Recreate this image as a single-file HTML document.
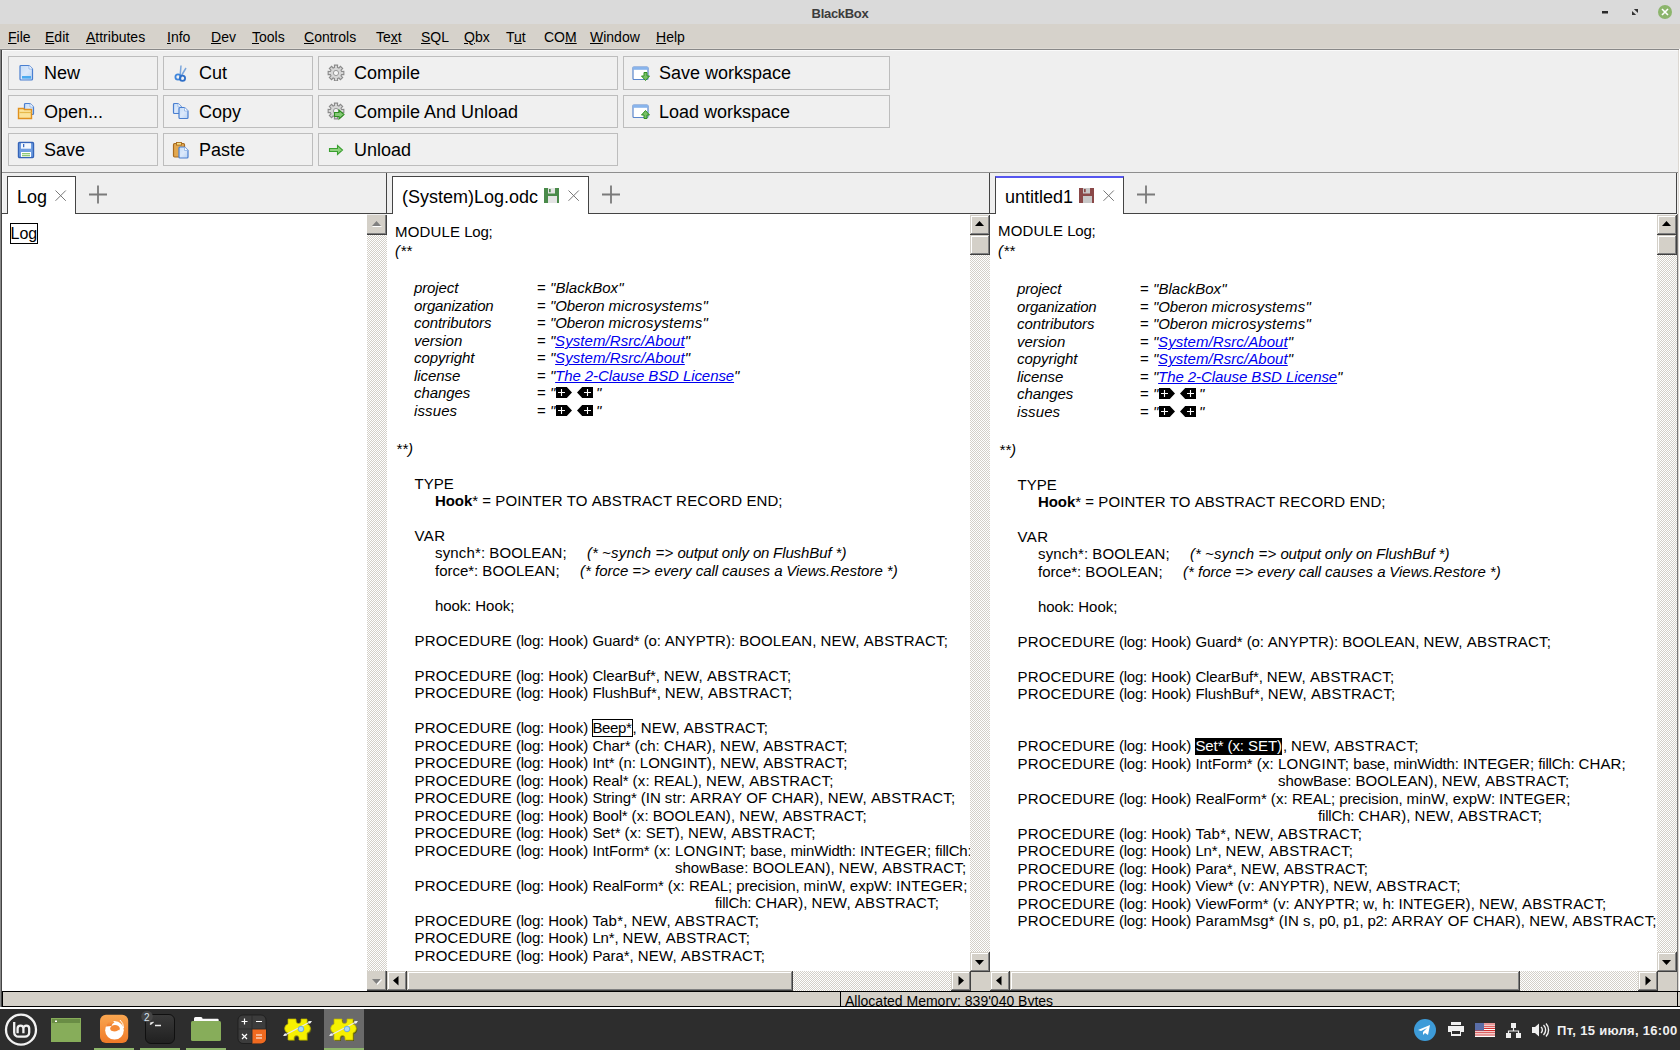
<!DOCTYPE html>
<html><head><meta charset="utf-8">
<style>
*{margin:0;padding:0;box-sizing:border-box}
html,body{width:1680px;height:1050px;overflow:hidden;background:#fff;font-family:"Liberation Sans",sans-serif;position:relative}
.a{position:absolute}
.ln{position:absolute;font-size:15px;line-height:17px;white-space:pre;color:#000}
.w{position:absolute;font-size:15px;line-height:17px;white-space:pre;color:#000}
.it{font-style:italic}.bd{font-weight:bold}
.ln i{font-style:italic;letter-spacing:-0.08px}
.ln b{font-weight:bold}
.lk{color:#0000ee;text-decoration:underline;text-underline-offset:1px;font-style:italic}
.beep{box-shadow:inset 0 0 0 1px #000;padding-bottom:1px;padding-right:1px}.sel{background:linear-gradient(to bottom,transparent 1px,#000 1px);padding-bottom:1px;color:#fff}
.fold{vertical-align:0;margin-left:1px}
#title{left:0;top:0;width:1680px;height:24px;background:#dadada}
#title .t{position:absolute;left:0;width:1680px;top:6px;text-align:center;font-size:13px;font-weight:bold;color:#3c3c3c;letter-spacing:-0.3px}
#menu{left:0;top:24px;width:1680px;height:25px;background:#d6d2cb;border-bottom:1px solid #dedad4}
#menu span{position:absolute;top:5px;font-size:14px;color:#000}
#menu u{text-decoration:underline;text-underline-offset:1px}
#win{left:0;top:49px;width:1680px;height:960px;background:#efefef;border-top:1px solid #888;border-left:1px solid #888;box-shadow:inset 1px 0 0 #444, inset 2px 1px 0 #fafafa}
.btn{position:absolute;border:1px solid #bdbdbd;background:#f0f0f0;font-size:18px;color:#000}
.btn .lb{position:absolute;left:35px;top:6px}
.tline{background:#8e8e8e;height:1px}
.strip{background:#efefef}
.tab{position:absolute;background:#fff;border:1px solid #444;border-bottom:none;font-size:18px;color:#000}
.tab .lb{position:absolute;left:10px;top:10px}
.pane{position:absolute;background:#fff}
.chk{background-color:#fff;background-image:conic-gradient(#d4d0c8 25%,#fff 0 50%,#d4d0c8 0 75%,#fff 0);background-size:2px 2px}
.sb{position:absolute;background:#d4d0c8;box-shadow:inset -1px -1px 0 #404040,inset 1px 1px 0 #d4d0c8,inset -2px -2px 0 #808080,inset 2px 2px 0 #fff}
.sbd{position:absolute;background:#d4d0c8;box-shadow:inset -1px -1px 0 #404040,inset -2px -2px 0 #808080}
#status{left:2px;top:991px;width:1678px;height:16px;background:#d4d0c8;border-top:1px solid #000;border-bottom:1px solid #000}
#task{left:0;top:1009px;width:1680px;height:41px;background:#2d2d2d}
</style></head><body>

<div id="title" class="a"><div class="t">BlackBox</div><svg class="a" style="left:1595px;top:0" width="85" height="24"><rect x="7" y="11" width="6" height="2.5" fill="#2a2a2a"/><path d="M38.8 8.9H43V13.1Z" fill="#333"/><path d="M37 10.9V15.1H41.2Z" fill="#333"/><circle cx="70" cy="12" r="7" fill="#8cb56c"/><path d="M67 9l6 6M73 9l-6 6" stroke="#fff" stroke-width="1.6"/></svg></div>
<div id="menu" class="a"><span style="left:8px"><u>F</u>ile</span><span style="left:45px"><u>E</u>dit</span><span style="left:86px"><u>A</u>ttributes</span><span style="left:167px"><u>I</u>nfo</span><span style="left:211px"><u>D</u>ev</span><span style="left:252px"><u>T</u>ools</span><span style="left:304px"><u>C</u>ontrols</span><span style="left:376px">Te<u>x</u>t</span><span style="left:421px"><u>S</u>QL</span><span style="left:464px"><u>Q</u>bx</span><span style="left:506px">T<u>u</u>t</span><span style="left:544px">CO<u>M</u></span><span style="left:590px"><u>W</u>indow</span><span style="left:656px"><u>H</u>elp</span></div>
<div id="win" class="a"></div><div class="a" style="left:1678px;top:50px;width:1px;height:959px;background:#dcd8d2"></div><div class="a" style="left:1679px;top:49px;width:1px;height:960px;background:#fff"></div>
<div class="btn" style="left:8px;top:56px;width:150px;height:34px"><div class="lb">New</div></div>
<div class="btn" style="left:163px;top:56px;width:150px;height:34px"><div class="lb">Cut</div></div>
<div class="btn" style="left:318px;top:56px;width:300px;height:34px"><div class="lb">Compile</div></div>
<div class="btn" style="left:623px;top:56px;width:267px;height:34px"><div class="lb">Save workspace</div></div>
<div class="btn" style="left:8px;top:95px;width:150px;height:33px"><div class="lb">Open...</div></div>
<div class="btn" style="left:163px;top:95px;width:150px;height:33px"><div class="lb">Copy</div></div>
<div class="btn" style="left:318px;top:95px;width:300px;height:33px"><div class="lb">Compile And Unload</div></div>
<div class="btn" style="left:623px;top:95px;width:267px;height:33px"><div class="lb">Load workspace</div></div>
<div class="btn" style="left:8px;top:133px;width:150px;height:33px"><div class="lb">Save</div></div>
<div class="btn" style="left:163px;top:133px;width:150px;height:33px"><div class="lb">Paste</div></div>
<div class="btn" style="left:318px;top:133px;width:300px;height:33px"><div class="lb">Unload</div></div>
<svg class="a" style="left:18px;top:64px" width="16" height="18" viewBox="0 0 16 18"><defs><linearGradient id="dg" x1="0" y1="0" x2="1" y2="1"><stop offset="0" stop-color="#c4dcf6"/><stop offset="0.5" stop-color="#dce9fb"/><stop offset="1" stop-color="#b8d2f2"/></linearGradient></defs><path d="M2.0 2.5a1 1 0 0 1 1-1H11.0L14.5 5V15.0a1 1 0 0 1-1 1H3.0a1 1 0 0 1-1-1Z" fill="url(#dg)" stroke="#4a7fd0" stroke-width="1.2"/><path d="M11.0 1.5V5H14.5" fill="#fff" stroke="#8ab0e6" stroke-width="0.8"/><rect x="4" y="12" width="9" height="2.6" fill="#4aaaf0"/></svg>
<svg class="a" style="left:17px;top:102px" width="18" height="18" viewBox="0 0 18 18"><path d="M7.5 2.5a1 1 0 0 1 1-1H13L16.5 5V11.5a1 1 0 0 1-1 1H8.5a1 1 0 0 1-1-1Z" fill="url(#dg)" stroke="#4a7fd0" stroke-width="1.2"/><path d="M13 1.5V5H16.5" fill="#fff" stroke="#8ab0e6" stroke-width="0.8"/><path d="M1.5 6.5h5l1 1h7v9h-13z" fill="#fbe39a" stroke="#e0901e" stroke-width="1.4"/><path d="M2.5 10.5h12" stroke="#e5b84a" stroke-width="1.2"/></svg>
<svg class="a" style="left:17px;top:141px" width="18" height="18" viewBox="0 0 18 18"><rect x="1.5" y="1.5" width="15" height="15" rx="1" fill="#6f9de0" stroke="#3564b8" stroke-width="1.4"/><rect x="4" y="2.2" width="10" height="5.5" fill="#f4f8fe"/><rect x="6" y="3" width="1.3" height="3.2" fill="#3a6ac0"/><rect x="4" y="11" width="10" height="5" fill="#fff"/><path d="M5 12.8h8M5 14.7h8" stroke="#6ab84a" stroke-width="1.1"/></svg>
<svg class="a" style="left:172px;top:64px" width="18" height="18" viewBox="0 0 18 18"><path d="M9 1.5L8.2 11 M14 4L9.5 11.5" stroke="#7ba6dc" stroke-width="1.5"/><circle cx="6" cy="13" r="2.6" fill="none" stroke="#3f86dc" stroke-width="1.8"/><circle cx="10.5" cy="14.3" r="2.6" fill="none" stroke="#2f6fc8" stroke-width="1.8"/></svg>
<svg class="a" style="left:172px;top:102px" width="18" height="18" viewBox="0 0 18 18"><path d="M1.5 2.5a1 1 0 0 1 1-1H6L9.5 5V10.5a1 1 0 0 1-1 1H2.5a1 1 0 0 1-1-1Z" fill="url(#dg)" stroke="#4a7fd0" stroke-width="1.2"/><path d="M6 1.5V5H9.5" fill="#fff" stroke="#8ab0e6" stroke-width="0.8"/><path d="M7.0 6.5a1 1 0 0 1 1-1H12.5L16.0 9V15.5a1 1 0 0 1-1 1H8.0a1 1 0 0 1-1-1Z" fill="url(#dg)" stroke="#4a7fd0" stroke-width="1.2"/><path d="M12.5 5.5V9H16.0" fill="#fff" stroke="#8ab0e6" stroke-width="0.8"/></svg>
<svg class="a" style="left:172px;top:141px" width="18" height="18" viewBox="0 0 18 18"><rect x="1.5" y="2.5" width="11" height="13.5" rx="1.2" fill="#e2a850" stroke="#a86a1e" stroke-width="1.2"/><rect x="4.5" y="1.5" width="5" height="2.6" fill="#f6e28a" stroke="#a86a1e" stroke-width="0.9"/><path d="M7.0 7.0a1 1 0 0 1 1-1H12.5L16.0 9.5V16.0a1 1 0 0 1-1 1H8.0a1 1 0 0 1-1-1Z" fill="url(#dg)" stroke="#4a7fd0" stroke-width="1.2"/><path d="M12.5 6.0V9.5H16.0" fill="#fff" stroke="#8ab0e6" stroke-width="0.8"/></svg>
<svg class="a" style="left:327px;top:63px" width="18" height="18" viewBox="0 0 18 18"><path d="M14.61 8.51 L16.84 8.41 L16.84 11.59 L14.61 11.49 L14.02 12.91 L15.67 14.42 L13.42 16.67 L11.91 15.02 L10.49 15.61 L10.59 17.84 L7.41 17.84 L7.51 15.61 L6.09 15.02 L4.58 16.67 L2.33 14.42 L3.98 12.91 L3.39 11.49 L1.16 11.59 L1.16 8.41 L3.39 8.51 L3.98 7.09 L2.33 5.58 L4.58 3.33 L6.09 4.98 L7.51 4.39 L7.41 2.16 L10.59 2.16 L10.49 4.39 L11.91 4.98 L13.42 3.33 L15.67 5.58 L14.02 7.09Z" fill="#d6d6d6" stroke="#8a8a8a" stroke-width="1.1"/><circle cx="9" cy="10" r="2.6" fill="#f4f4f4" stroke="#9a9a9a" stroke-width="1"/></svg>
<svg class="a" style="left:327px;top:101px" width="20" height="20" viewBox="0 0 20 20"><path d="M14.61 8.51 L16.84 8.41 L16.84 11.59 L14.61 11.49 L14.02 12.91 L15.67 14.42 L13.42 16.67 L11.91 15.02 L10.49 15.61 L10.59 17.84 L7.41 17.84 L7.51 15.61 L6.09 15.02 L4.58 16.67 L2.33 14.42 L3.98 12.91 L3.39 11.49 L1.16 11.59 L1.16 8.41 L3.39 8.51 L3.98 7.09 L2.33 5.58 L4.58 3.33 L6.09 4.98 L7.51 4.39 L7.41 2.16 L10.59 2.16 L10.49 4.39 L11.91 4.98 L13.42 3.33 L15.67 5.58 L14.02 7.09Z" fill="#d6d6d6" stroke="#8a8a8a" stroke-width="1.1"/><circle cx="9" cy="10" r="2.6" fill="#f4f4f4" stroke="#9a9a9a" stroke-width="1"/><path d="M7.5 11.5h4.5V9l5 4.5-5 4.5v-2.5H7.5z" fill="#86c877" stroke="#2f8f22" stroke-width="1.1"/></svg>
<svg class="a" style="left:327px;top:143px" width="18" height="14" viewBox="0 0 18 14"><path d="M2.5 5.5h8V2.5l5 4.5-5 4.5V8.5h-8z" fill="#8fd07e" stroke="#3aa030" stroke-width="1.1"/></svg>
<svg class="a" style="left:632px;top:65px" width="18" height="18" viewBox="0 0 18 18"><rect x="1" y="2" width="15" height="12.5" rx="1" fill="#fff" stroke="#5a86cc" stroke-width="1.2"/><rect x="1" y="2" width="15" height="2.8" fill="#88b4ec"/><path d="M12 7.5h3v3.5h2.5L13.5 15.5L9.5 11H12z" fill="#78c068" stroke="#2f8f22" stroke-width="1"/></svg>
<svg class="a" style="left:632px;top:103px" width="18" height="18" viewBox="0 0 18 18"><rect x="1" y="2" width="15" height="12.5" rx="1" fill="#fff" stroke="#5a86cc" stroke-width="1.2"/><rect x="1" y="2" width="15" height="2.8" fill="#88b4ec"/><path d="M12 15.5h3v-3.5h2.5L13.5 7.5L9.5 12H12z" fill="#78c068" stroke="#2f8f22" stroke-width="1"/></svg>
<div class="a tline" style="left:2px;top:172px;width:1676px"></div>
<div class="pane" style="left:2px;top:214px;width:365px;height:777px"></div>
<div class="a" style="left:386px;top:173px;width:1px;height:41px;background:#444"></div>
<div class="a" style="left:2px;top:213px;width:386px;height:1px;background:#444"></div>
<div class="tab" style="left:7px;top:176px;width:69px;height:38px"><div class="lb" style="left:9px">Log</div></div>
<svg class="a" style="left:55px;top:190px" width="12" height="12"><path d="M0.5 0.5L10.8 10.8M10.8 0.5L0.5 10.8" stroke="#777" stroke-width="1"/></svg>
<svg class="a" style="left:89px;top:185px" width="19" height="19"><path d="M0 9.5H18M9 0.5V18.5" stroke="#7a7a7a" stroke-width="1.8"/></svg>
<div class="ln" style="left:10.5px;top:224px;font-size:16px;line-height:19px">Log</div>
<div class="a" style="left:10px;top:223px;width:28px;height:21px;border:1px solid #000"></div>
<div class="a chk" style="left:367px;top:215px;width:20px;height:776px"></div><div class="sbd" style="left:367px;top:215px;width:20px;height:20px"><svg style="position:absolute;left:0;top:0" width="20" height="20"><path d="M5 11L9.5 6L14 11Z" fill="#808080"/><path d="M5.5 11.5H14.5" stroke="#fff" stroke-width="1"/></svg></div><div class="sbd" style="left:367px;top:971px;width:20px;height:20px"><svg style="position:absolute;left:0;top:0" width="20" height="20"><path d="M5 8L9.5 13L14 8Z" fill="#808080"/><path d="M10 13.5L14.5 8.5" stroke="#fff" stroke-width="1.2"/></svg></div>
<div class="a" style="left:989px;top:173px;width:1px;height:41px;background:#444"></div>
<div class="a" style="left:388px;top:213px;width:602px;height:1px;background:#444"></div>
<div class="tab" style="left:392px;top:176px;width:197px;height:38px"><div class="lb" style="left:9px">(System)Log.odc</div></div>
<svg class="a" style="left:544px;top:188px" width="15" height="15" viewBox="0 0 15 15"><rect x="0" y="0" width="15" height="15" fill="#4a8a4a"/><rect x="4" y="0" width="7" height="5.5" fill="#e4e4e4"/><rect x="5" y="1" width="1.7" height="3.2" fill="#4a8a4a"/><rect x="4" y="8" width="9" height="7" fill="#e4e4e4"/></svg>
<svg class="a" style="left:568px;top:190px" width="12" height="12"><path d="M0.5 0.5L10.8 10.8M10.8 0.5L0.5 10.8" stroke="#777" stroke-width="1"/></svg>
<svg class="a" style="left:602px;top:185px" width="19" height="19"><path d="M0 9.5H18M9 0.5V18.5" stroke="#7a7a7a" stroke-width="1.8"/></svg>
<div class="a" style="left:1676px;top:173px;width:1px;height:41px;background:#444"></div>
<div class="a" style="left:990px;top:213px;width:687px;height:1px;background:#444"></div>
<div class="tab" style="left:995px;top:176px;width:129px;height:38px;border-top:2px solid #5656f0"><div class="lb" style="left:9px;top:9px">untitled1</div></div>
<svg class="a" style="left:1079px;top:188px" width="15" height="15" viewBox="0 0 15 15"><rect x="0" y="0" width="15" height="15" fill="#8a4848"/><rect x="4" y="0" width="7" height="5.5" fill="#c8c8c8"/><rect x="5" y="1" width="1.7" height="3.2" fill="#8a4848"/><rect x="4" y="8" width="9" height="7" fill="#c8c8c8"/></svg>
<svg class="a" style="left:1103px;top:190px" width="12" height="12"><path d="M0.5 0.5L10.8 10.8M10.8 0.5L0.5 10.8" stroke="#777" stroke-width="1"/></svg>
<svg class="a" style="left:1137px;top:185px" width="19" height="19"><path d="M0 9.5H18M9 0.5V18.5" stroke="#7a7a7a" stroke-width="1.8"/></svg>
<div class="a" style="left:387px;top:214px;width:583px;height:757px;overflow:hidden;background:#fff">
<div class="a" style="left:-387px;top:-214px;width:1680px;height:1050px">
<span class="w" style="left:395.00px;top:223px;letter-spacing:0.178px">MODULE</span>
<span class="w" style="left:464.28px;top:223px;letter-spacing:-0.261px">Log;</span>
<span class="w it" style="left:395.00px;top:242px;letter-spacing:0.144px">(**</span>
<span class="w it" style="left:414.00px;top:279px;letter-spacing:-0.107px">project</span>
<span class="w" style="left:537.00px;top:279px;letter-spacing:0.274px">=</span>
<span class="w it" style="left:550.08px;top:279px;letter-spacing:0.023px">&quot;BlackBox&quot;</span>
<span class="w it" style="left:414.00px;top:297px;letter-spacing:-0.188px">organization</span>
<span class="w" style="left:537.00px;top:297px;letter-spacing:0.274px">=</span>
<span class="w it" style="left:550.08px;top:297px;letter-spacing:-0.156px">&quot;Oberon</span>
<span class="w it" style="left:608.40px;top:297px;letter-spacing:0.193px">microsystems&quot;</span>
<span class="w it" style="left:414.00px;top:314px;letter-spacing:-0.076px">contributors</span>
<span class="w" style="left:537.00px;top:314px;letter-spacing:0.274px">=</span>
<span class="w it" style="left:550.08px;top:314px;letter-spacing:-0.156px">&quot;Oberon</span>
<span class="w it" style="left:608.40px;top:314px;letter-spacing:0.193px">microsystems&quot;</span>
<span class="w it" style="left:414.00px;top:332px;letter-spacing:-0.011px">version</span>
<span class="w" style="left:537.00px;top:332px;letter-spacing:0.274px">=</span>
<span class="w it" style="left:550.08px;top:332px;letter-spacing:-0.288px">&quot;</span>
<span class="w it lk" style="left:555.12px;top:332px;letter-spacing:0.076px">System/Rsrc/About</span>
<span class="w it" style="left:684.80px;top:332px;letter-spacing:-0.288px">&quot;</span>
<span class="w it" style="left:414.00px;top:349px;letter-spacing:-0.057px">copyright</span>
<span class="w" style="left:537.00px;top:349px;letter-spacing:0.274px">=</span>
<span class="w it" style="left:550.08px;top:349px;letter-spacing:-0.288px">&quot;</span>
<span class="w it lk" style="left:555.12px;top:349px;letter-spacing:0.076px">System/Rsrc/About</span>
<span class="w it" style="left:684.80px;top:349px;letter-spacing:-0.288px">&quot;</span>
<span class="w it" style="left:414.00px;top:367px;letter-spacing:-0.058px">license</span>
<span class="w" style="left:537.00px;top:367px;letter-spacing:0.274px">=</span>
<span class="w it" style="left:550.08px;top:367px;letter-spacing:-0.288px">&quot;</span>
<span class="w it lk" style="left:555.12px;top:367px;letter-spacing:-0.082px">The 2-Clause BSD License</span>
<span class="w it" style="left:734.08px;top:367px;letter-spacing:-0.288px">&quot;</span>
<span class="w it" style="left:414.00px;top:384px;letter-spacing:-0.063px">changes</span>
<span class="w" style="left:537.00px;top:384px;letter-spacing:0.274px">=</span>
<span class="w it" style="left:550.08px;top:384px;letter-spacing:-0.288px">&quot;</span>
<div class="a" style="left:556.12px;top:387px"><svg width="38" height="11" viewBox="0 0 38 11" style="display:block"><path d="M0 0H10.8L16 5.5L10.8 11H0Z" fill="#000"/><path d="M2 5.5H9M5.5 2V9" stroke="#fff" stroke-width="1.1"/><path d="M37 0H26.2L21 5.5L26.2 11H37Z" fill="#000"/><path d="M28 5.5H35M31.5 2V9" stroke="#fff" stroke-width="1.1"/></svg></div>
<span class="w it" style="left:596.12px;top:384px;letter-spacing:-0.288px">&quot;</span>
<span class="w it" style="left:414.00px;top:402px;letter-spacing:0.121px">issues</span>
<span class="w" style="left:537.00px;top:402px;letter-spacing:0.274px">=</span>
<span class="w it" style="left:550.08px;top:402px;letter-spacing:-0.288px">&quot;</span>
<div class="a" style="left:556.12px;top:405px"><svg width="38" height="11" viewBox="0 0 38 11" style="display:block"><path d="M0 0H10.8L16 5.5L10.8 11H0Z" fill="#000"/><path d="M2 5.5H9M5.5 2V9" stroke="#fff" stroke-width="1.1"/><path d="M37 0H26.2L21 5.5L26.2 11H37Z" fill="#000"/><path d="M28 5.5H35M31.5 2V9" stroke="#fff" stroke-width="1.1"/></svg></div>
<span class="w it" style="left:596.12px;top:402px;letter-spacing:-0.288px">&quot;</span>
<span class="w it" style="left:396.00px;top:440px;letter-spacing:0.144px">**)</span>
<span class="w" style="left:414.50px;top:475px;letter-spacing:0.001px">TYPE</span>
<span class="w bd" style="left:435.00px;top:492px;letter-spacing:-0.081px">Hook</span>
<span class="w" style="left:472.16px;top:492px;letter-spacing:0.196px">*</span>
<span class="w" style="left:482.24px;top:492px;letter-spacing:0.274px">=</span>
<span class="w" style="left:495.32px;top:492px;letter-spacing:0.089px">POINTER</span>
<span class="w" style="left:566.64px;top:492px;letter-spacing:0.259px">TO</span>
<span class="w" style="left:591.76px;top:492px;letter-spacing:0.044px">ABSTRACT</span>
<span class="w" style="left:676.12px;top:492px;letter-spacing:0.209px">RECORD</span>
<span class="w" style="left:746.40px;top:492px;letter-spacing:0.083px">END;</span>
<span class="w" style="left:414.50px;top:527px;letter-spacing:0.462px">VAR</span>
<span class="w" style="left:435.00px;top:544px;letter-spacing:0.154px">synch*:</span>
<span class="w" style="left:489.32px;top:544px;letter-spacing:0.079px">BOOLEAN;</span>
<span class="w it" style="left:587.00px;top:544px;letter-spacing:0.118px">(*</span>
<span class="w it" style="left:602.12px;top:544px;letter-spacing:0.214px">~synch</span>
<span class="w it" style="left:655.40px;top:544px;letter-spacing:0.274px">=&gt;</span>
<span class="w it" style="left:677.52px;top:544px;letter-spacing:-0.246px">output</span>
<span class="w it" style="left:721.80px;top:544px;letter-spacing:-0.089px">only</span>
<span class="w it" style="left:753.00px;top:544px;letter-spacing:-0.304px">on</span>
<span class="w it" style="left:773.12px;top:544px;letter-spacing:-0.108px">FlushBuf</span>
<span class="w it" style="left:835.48px;top:544px;letter-spacing:0.118px">*)</span>
<span class="w" style="left:435.00px;top:562px;letter-spacing:-0.014px">force*:</span>
<span class="w" style="left:482.32px;top:562px;letter-spacing:0.079px">BOOLEAN;</span>
<span class="w it" style="left:580.00px;top:562px;letter-spacing:0.118px">(*</span>
<span class="w it" style="left:595.12px;top:562px;letter-spacing:-0.032px">force</span>
<span class="w it" style="left:632.36px;top:562px;letter-spacing:0.274px">=&gt;</span>
<span class="w it" style="left:654.48px;top:562px;letter-spacing:0.103px">every</span>
<span class="w it" style="left:695.72px;top:562px;letter-spacing:-0.085px">call</span>
<span class="w it" style="left:721.92px;top:562px;letter-spacing:0.118px">causes</span>
<span class="w it" style="left:774.20px;top:562px;letter-spacing:-0.304px">a</span>
<span class="w it" style="left:786.28px;top:562px;letter-spacing:0.006px">Views.Restore</span>
<span class="w it" style="left:886.84px;top:562px;letter-spacing:0.118px">*)</span>
<span class="w" style="left:435.00px;top:597px;letter-spacing:-0.101px">hook:</span>
<span class="w" style="left:475.24px;top:597px;letter-spacing:0.003px">Hook;</span>
<span class="w" style="left:414.50px;top:632px;letter-spacing:0.172px">PROCEDURE</span>
<span class="w" style="left:515.90px;top:632px;letter-spacing:-0.198px">(log:</span>
<span class="w" style="left:548.14px;top:632px;letter-spacing:0.037px">Hook)</span>
<span class="w" style="left:592.38px;top:632px;letter-spacing:-0.051px">Guard*</span>
<span class="w" style="left:643.66px;top:632px;letter-spacing:-0.132px">(o:</span>
<span class="w" style="left:664.82px;top:632px;letter-spacing:0.042px">ANYPTR):</span>
<span class="w" style="left:739.18px;top:632px;letter-spacing:0.079px">BOOLEAN,</span>
<span class="w" style="left:820.54px;top:632px;letter-spacing:0.208px">NEW,</span>
<span class="w" style="left:863.74px;top:632px;letter-spacing:0.207px">ABSTRACT;</span>
<span class="w" style="left:414.50px;top:667px;letter-spacing:0.172px">PROCEDURE</span>
<span class="w" style="left:515.90px;top:667px;letter-spacing:-0.198px">(log:</span>
<span class="w" style="left:548.14px;top:667px;letter-spacing:0.037px">Hook)</span>
<span class="w" style="left:592.38px;top:667px;letter-spacing:-0.097px">ClearBuf*,</span>
<span class="w" style="left:663.82px;top:667px;letter-spacing:0.208px">NEW,</span>
<span class="w" style="left:707.02px;top:667px;letter-spacing:0.207px">ABSTRACT;</span>
<span class="w" style="left:414.50px;top:684px;letter-spacing:0.172px">PROCEDURE</span>
<span class="w" style="left:515.90px;top:684px;letter-spacing:-0.198px">(log:</span>
<span class="w" style="left:548.14px;top:684px;letter-spacing:0.037px">Hook)</span>
<span class="w" style="left:592.38px;top:684px;letter-spacing:-0.080px">FlushBuf*,</span>
<span class="w" style="left:664.82px;top:684px;letter-spacing:0.208px">NEW,</span>
<span class="w" style="left:708.02px;top:684px;letter-spacing:0.207px">ABSTRACT;</span>
<span class="w" style="left:414.50px;top:719px;letter-spacing:0.172px">PROCEDURE</span>
<span class="w" style="left:515.90px;top:719px;letter-spacing:-0.198px">(log:</span>
<span class="w" style="left:548.14px;top:719px;letter-spacing:0.037px">Hook)</span>
<span class="w beep" style="left:592.38px;top:719px;letter-spacing:-0.335px">Beep*</span>
<span class="w" style="left:632.58px;top:719px;letter-spacing:-0.132px">,</span>
<span class="w" style="left:640.66px;top:719px;letter-spacing:0.208px">NEW,</span>
<span class="w" style="left:683.86px;top:719px;letter-spacing:0.207px">ABSTRACT;</span>
<span class="w" style="left:414.50px;top:737px;letter-spacing:0.172px">PROCEDURE</span>
<span class="w" style="left:515.90px;top:737px;letter-spacing:-0.198px">(log:</span>
<span class="w" style="left:548.14px;top:737px;letter-spacing:0.037px">Hook)</span>
<span class="w" style="left:592.38px;top:737px;letter-spacing:-0.032px">Char*</span>
<span class="w" style="left:634.62px;top:737px;letter-spacing:0.036px">(ch:</span>
<span class="w" style="left:663.82px;top:737px;letter-spacing:0.097px">CHAR),</span>
<span class="w" style="left:720.10px;top:737px;letter-spacing:0.208px">NEW,</span>
<span class="w" style="left:763.30px;top:737px;letter-spacing:0.207px">ABSTRACT;</span>
<span class="w" style="left:414.50px;top:754px;letter-spacing:0.172px">PROCEDURE</span>
<span class="w" style="left:515.90px;top:754px;letter-spacing:-0.198px">(log:</span>
<span class="w" style="left:548.14px;top:754px;letter-spacing:0.037px">Hook)</span>
<span class="w" style="left:592.38px;top:754px;letter-spacing:-0.093px">Int*</span>
<span class="w" style="left:618.58px;top:754px;letter-spacing:-0.132px">(n:</span>
<span class="w" style="left:639.74px;top:754px;letter-spacing:0.057px">LONGINT),</span>
<span class="w" style="left:720.14px;top:754px;letter-spacing:0.208px">NEW,</span>
<span class="w" style="left:763.34px;top:754px;letter-spacing:0.207px">ABSTRACT;</span>
<span class="w" style="left:414.50px;top:772px;letter-spacing:0.172px">PROCEDURE</span>
<span class="w" style="left:515.90px;top:772px;letter-spacing:-0.198px">(log:</span>
<span class="w" style="left:548.14px;top:772px;letter-spacing:0.037px">Hook)</span>
<span class="w" style="left:592.38px;top:772px;letter-spacing:-0.097px">Real*</span>
<span class="w" style="left:632.62px;top:772px;letter-spacing:0.149px">(x:</span>
<span class="w" style="left:653.78px;top:772px;letter-spacing:-0.017px">REAL),</span>
<span class="w" style="left:706.06px;top:772px;letter-spacing:0.208px">NEW,</span>
<span class="w" style="left:749.26px;top:772px;letter-spacing:0.207px">ABSTRACT;</span>
<span class="w" style="left:414.50px;top:789px;letter-spacing:0.172px">PROCEDURE</span>
<span class="w" style="left:515.90px;top:789px;letter-spacing:-0.198px">(log:</span>
<span class="w" style="left:548.14px;top:789px;letter-spacing:0.037px">Hook)</span>
<span class="w" style="left:592.38px;top:789px;letter-spacing:-0.107px">String*</span>
<span class="w" style="left:640.70px;top:789px;letter-spacing:0.040px">(IN</span>
<span class="w" style="left:664.86px;top:789px;letter-spacing:0.079px">str:</span>
<span class="w" style="left:690.06px;top:789px;letter-spacing:0.328px">ARRAY</span>
<span class="w" style="left:746.28px;top:789px;letter-spacing:0.126px">OF</span>
<span class="w" style="left:771.40px;top:789px;letter-spacing:0.097px">CHAR),</span>
<span class="w" style="left:827.68px;top:789px;letter-spacing:0.208px">NEW,</span>
<span class="w" style="left:870.88px;top:789px;letter-spacing:0.207px">ABSTRACT;</span>
<span class="w" style="left:414.50px;top:807px;letter-spacing:0.172px">PROCEDURE</span>
<span class="w" style="left:515.90px;top:807px;letter-spacing:-0.198px">(log:</span>
<span class="w" style="left:548.14px;top:807px;letter-spacing:0.037px">Hook)</span>
<span class="w" style="left:592.38px;top:807px;letter-spacing:-0.132px">Bool*</span>
<span class="w" style="left:631.62px;top:807px;letter-spacing:0.149px">(x:</span>
<span class="w" style="left:652.78px;top:807px;letter-spacing:0.075px">BOOLEAN),</span>
<span class="w" style="left:739.18px;top:807px;letter-spacing:0.208px">NEW,</span>
<span class="w" style="left:782.38px;top:807px;letter-spacing:0.207px">ABSTRACT;</span>
<span class="w" style="left:414.50px;top:824px;letter-spacing:0.172px">PROCEDURE</span>
<span class="w" style="left:515.90px;top:824px;letter-spacing:-0.198px">(log:</span>
<span class="w" style="left:548.14px;top:824px;letter-spacing:0.037px">Hook)</span>
<span class="w" style="left:592.38px;top:824px;letter-spacing:-0.050px">Set*</span>
<span class="w" style="left:624.58px;top:824px;letter-spacing:0.149px">(x:</span>
<span class="w" style="left:645.74px;top:824px;letter-spacing:-0.026px">SET),</span>
<span class="w" style="left:687.98px;top:824px;letter-spacing:0.208px">NEW,</span>
<span class="w" style="left:731.18px;top:824px;letter-spacing:0.207px">ABSTRACT;</span>
<span class="w" style="left:414.50px;top:842px;letter-spacing:0.172px">PROCEDURE</span>
<span class="w" style="left:515.90px;top:842px;letter-spacing:-0.198px">(log:</span>
<span class="w" style="left:548.14px;top:842px;letter-spacing:0.037px">Hook)</span>
<span class="w" style="left:592.38px;top:842px;letter-spacing:-0.026px">IntForm*</span>
<span class="w" style="left:653.74px;top:842px;letter-spacing:0.149px">(x:</span>
<span class="w" style="left:674.90px;top:842px;letter-spacing:0.265px">LONGINT;</span>
<span class="w" style="left:750.24px;top:842px;letter-spacing:-0.101px">base,</span>
<span class="w" style="left:790.48px;top:842px;letter-spacing:-0.148px">minWidth:</span>
<span class="w" style="left:859.88px;top:842px;letter-spacing:0.061px">INTEGER;</span>
<span class="w" style="left:935.24px;top:842px;letter-spacing:-0.174px">fillCh:</span>
<span class="w" style="left:975.56px;top:842px;letter-spacing:0.109px">CHAR;</span>
<span class="w" style="left:675.00px;top:859px;letter-spacing:-0.002px">showBase:</span>
<span class="w" style="left:752.40px;top:859px;letter-spacing:0.075px">BOOLEAN),</span>
<span class="w" style="left:838.80px;top:859px;letter-spacing:0.208px">NEW,</span>
<span class="w" style="left:882.00px;top:859px;letter-spacing:0.207px">ABSTRACT;</span>
<span class="w" style="left:414.50px;top:877px;letter-spacing:0.172px">PROCEDURE</span>
<span class="w" style="left:515.90px;top:877px;letter-spacing:-0.198px">(log:</span>
<span class="w" style="left:548.14px;top:877px;letter-spacing:0.037px">Hook)</span>
<span class="w" style="left:592.38px;top:877px;letter-spacing:-0.036px">RealForm*</span>
<span class="w" style="left:667.78px;top:877px;letter-spacing:0.149px">(x:</span>
<span class="w" style="left:688.94px;top:877px;letter-spacing:-0.029px">REAL;</span>
<span class="w" style="left:736.18px;top:877px;letter-spacing:-0.080px">precision,</span>
<span class="w" style="left:803.62px;top:877px;letter-spacing:0.106px">minW,</span>
<span class="w" style="left:849.86px;top:877px;letter-spacing:-0.010px">expW:</span>
<span class="w" style="left:896.10px;top:877px;letter-spacing:0.061px">INTEGER;</span>
<span class="w" style="left:715.00px;top:894px;letter-spacing:-0.174px">fillCh:</span>
<span class="w" style="left:755.32px;top:894px;letter-spacing:0.097px">CHAR),</span>
<span class="w" style="left:811.60px;top:894px;letter-spacing:0.208px">NEW,</span>
<span class="w" style="left:854.80px;top:894px;letter-spacing:0.207px">ABSTRACT;</span>
<span class="w" style="left:414.50px;top:912px;letter-spacing:0.172px">PROCEDURE</span>
<span class="w" style="left:515.90px;top:912px;letter-spacing:-0.198px">(log:</span>
<span class="w" style="left:548.14px;top:912px;letter-spacing:0.037px">Hook)</span>
<span class="w" style="left:592.38px;top:912px;letter-spacing:0.196px">Tab*,</span>
<span class="w" style="left:631.60px;top:912px;letter-spacing:0.208px">NEW,</span>
<span class="w" style="left:674.80px;top:912px;letter-spacing:0.207px">ABSTRACT;</span>
<span class="w" style="left:414.50px;top:929px;letter-spacing:0.172px">PROCEDURE</span>
<span class="w" style="left:515.90px;top:929px;letter-spacing:-0.198px">(log:</span>
<span class="w" style="left:548.14px;top:929px;letter-spacing:0.037px">Hook)</span>
<span class="w" style="left:592.38px;top:929px;letter-spacing:-0.136px">Ln*,</span>
<span class="w" style="left:622.58px;top:929px;letter-spacing:0.208px">NEW,</span>
<span class="w" style="left:665.78px;top:929px;letter-spacing:0.207px">ABSTRACT;</span>
<span class="w" style="left:414.50px;top:947px;letter-spacing:0.172px">PROCEDURE</span>
<span class="w" style="left:515.90px;top:947px;letter-spacing:-0.198px">(log:</span>
<span class="w" style="left:548.14px;top:947px;letter-spacing:0.037px">Hook)</span>
<span class="w" style="left:592.38px;top:947px;letter-spacing:-0.077px">Para*,</span>
<span class="w" style="left:637.66px;top:947px;letter-spacing:0.208px">NEW,</span>
<span class="w" style="left:680.86px;top:947px;letter-spacing:0.207px">ABSTRACT;</span>
</div></div>
<div class="a" style="left:970px;top:971px;width:20px;height:20px;background:#d4d0c8"></div>
<div class="a chk" style="left:970px;top:215px;width:20px;height:757px"></div><div class="sb" style="left:970px;top:215px;width:20px;height:20px"><svg style="position:absolute;left:0;top:0" width="20" height="20"><path d="M5 11L9.5 6L14 11Z" fill="#000"/></svg></div><div class="sb" style="left:970px;top:952px;width:20px;height:20px"><svg style="position:absolute;left:0;top:0" width="20" height="20"><path d="M5 8L9.5 13L14 8Z" fill="#000"/></svg></div><div class="sb" style="left:970px;top:235px;width:20px;height:20px"></div>
<div class="a chk" style="left:387px;top:971px;width:584px;height:20px"></div><div class="sb" style="left:387px;top:971px;width:20px;height:20px"><svg style="position:absolute;left:0;top:0" width="20" height="20"><path d="M11.5 5L6 9.5L11.5 14.5Z" fill="#000"/></svg></div><div class="sb" style="left:951px;top:971px;width:20px;height:20px"><svg style="position:absolute;left:0;top:0" width="20" height="20"><path d="M7.5 5L13 9.5L7.5 14.5Z" fill="#000"/></svg></div><div class="sb" style="left:407px;top:971px;width:386px;height:20px"></div>
<div class="a" style="left:990px;top:214px;width:667px;height:757px;overflow:hidden;background:#fff">
<div class="a" style="left:-990px;top:-214px;width:1680px;height:1050px">
<span class="w" style="left:998.00px;top:222px;letter-spacing:0.178px">MODULE</span>
<span class="w" style="left:1067.28px;top:222px;letter-spacing:-0.261px">Log;</span>
<span class="w it" style="left:998.00px;top:242px;letter-spacing:0.144px">(**</span>
<span class="w it" style="left:1017.00px;top:280px;letter-spacing:-0.107px">project</span>
<span class="w" style="left:1140.00px;top:280px;letter-spacing:0.274px">=</span>
<span class="w it" style="left:1153.08px;top:280px;letter-spacing:0.023px">&quot;BlackBox&quot;</span>
<span class="w it" style="left:1017.00px;top:298px;letter-spacing:-0.188px">organization</span>
<span class="w" style="left:1140.00px;top:298px;letter-spacing:0.274px">=</span>
<span class="w it" style="left:1153.08px;top:298px;letter-spacing:-0.156px">&quot;Oberon</span>
<span class="w it" style="left:1211.40px;top:298px;letter-spacing:0.193px">microsystems&quot;</span>
<span class="w it" style="left:1017.00px;top:315px;letter-spacing:-0.076px">contributors</span>
<span class="w" style="left:1140.00px;top:315px;letter-spacing:0.274px">=</span>
<span class="w it" style="left:1153.08px;top:315px;letter-spacing:-0.156px">&quot;Oberon</span>
<span class="w it" style="left:1211.40px;top:315px;letter-spacing:0.193px">microsystems&quot;</span>
<span class="w it" style="left:1017.00px;top:333px;letter-spacing:-0.011px">version</span>
<span class="w" style="left:1140.00px;top:333px;letter-spacing:0.274px">=</span>
<span class="w it" style="left:1153.08px;top:333px;letter-spacing:-0.288px">&quot;</span>
<span class="w it lk" style="left:1158.12px;top:333px;letter-spacing:0.076px">System/Rsrc/About</span>
<span class="w it" style="left:1287.80px;top:333px;letter-spacing:-0.288px">&quot;</span>
<span class="w it" style="left:1017.00px;top:350px;letter-spacing:-0.057px">copyright</span>
<span class="w" style="left:1140.00px;top:350px;letter-spacing:0.274px">=</span>
<span class="w it" style="left:1153.08px;top:350px;letter-spacing:-0.288px">&quot;</span>
<span class="w it lk" style="left:1158.12px;top:350px;letter-spacing:0.076px">System/Rsrc/About</span>
<span class="w it" style="left:1287.80px;top:350px;letter-spacing:-0.288px">&quot;</span>
<span class="w it" style="left:1017.00px;top:368px;letter-spacing:-0.058px">license</span>
<span class="w" style="left:1140.00px;top:368px;letter-spacing:0.274px">=</span>
<span class="w it" style="left:1153.08px;top:368px;letter-spacing:-0.288px">&quot;</span>
<span class="w it lk" style="left:1158.12px;top:368px;letter-spacing:-0.082px">The 2-Clause BSD License</span>
<span class="w it" style="left:1337.08px;top:368px;letter-spacing:-0.288px">&quot;</span>
<span class="w it" style="left:1017.00px;top:385px;letter-spacing:-0.063px">changes</span>
<span class="w" style="left:1140.00px;top:385px;letter-spacing:0.274px">=</span>
<span class="w it" style="left:1153.08px;top:385px;letter-spacing:-0.288px">&quot;</span>
<div class="a" style="left:1159.12px;top:388px"><svg width="38" height="11" viewBox="0 0 38 11" style="display:block"><path d="M0 0H10.8L16 5.5L10.8 11H0Z" fill="#000"/><path d="M2 5.5H9M5.5 2V9" stroke="#fff" stroke-width="1.1"/><path d="M37 0H26.2L21 5.5L26.2 11H37Z" fill="#000"/><path d="M28 5.5H35M31.5 2V9" stroke="#fff" stroke-width="1.1"/></svg></div>
<span class="w it" style="left:1199.12px;top:385px;letter-spacing:-0.288px">&quot;</span>
<span class="w it" style="left:1017.00px;top:403px;letter-spacing:0.121px">issues</span>
<span class="w" style="left:1140.00px;top:403px;letter-spacing:0.274px">=</span>
<span class="w it" style="left:1153.08px;top:403px;letter-spacing:-0.288px">&quot;</span>
<div class="a" style="left:1159.12px;top:406px"><svg width="38" height="11" viewBox="0 0 38 11" style="display:block"><path d="M0 0H10.8L16 5.5L10.8 11H0Z" fill="#000"/><path d="M2 5.5H9M5.5 2V9" stroke="#fff" stroke-width="1.1"/><path d="M37 0H26.2L21 5.5L26.2 11H37Z" fill="#000"/><path d="M28 5.5H35M31.5 2V9" stroke="#fff" stroke-width="1.1"/></svg></div>
<span class="w it" style="left:1199.12px;top:403px;letter-spacing:-0.288px">&quot;</span>
<span class="w it" style="left:999.00px;top:441px;letter-spacing:0.144px">**)</span>
<span class="w" style="left:1017.50px;top:476px;letter-spacing:0.001px">TYPE</span>
<span class="w bd" style="left:1038.00px;top:493px;letter-spacing:-0.081px">Hook</span>
<span class="w" style="left:1075.16px;top:493px;letter-spacing:0.196px">*</span>
<span class="w" style="left:1085.24px;top:493px;letter-spacing:0.274px">=</span>
<span class="w" style="left:1098.32px;top:493px;letter-spacing:0.089px">POINTER</span>
<span class="w" style="left:1169.64px;top:493px;letter-spacing:0.259px">TO</span>
<span class="w" style="left:1194.76px;top:493px;letter-spacing:0.044px">ABSTRACT</span>
<span class="w" style="left:1279.12px;top:493px;letter-spacing:0.209px">RECORD</span>
<span class="w" style="left:1349.40px;top:493px;letter-spacing:0.083px">END;</span>
<span class="w" style="left:1017.50px;top:528px;letter-spacing:0.462px">VAR</span>
<span class="w" style="left:1038.00px;top:545px;letter-spacing:0.154px">synch*:</span>
<span class="w" style="left:1092.32px;top:545px;letter-spacing:0.079px">BOOLEAN;</span>
<span class="w it" style="left:1190.00px;top:545px;letter-spacing:0.118px">(*</span>
<span class="w it" style="left:1205.12px;top:545px;letter-spacing:0.214px">~synch</span>
<span class="w it" style="left:1258.40px;top:545px;letter-spacing:0.274px">=&gt;</span>
<span class="w it" style="left:1280.52px;top:545px;letter-spacing:-0.246px">output</span>
<span class="w it" style="left:1324.80px;top:545px;letter-spacing:-0.089px">only</span>
<span class="w it" style="left:1356.00px;top:545px;letter-spacing:-0.304px">on</span>
<span class="w it" style="left:1376.12px;top:545px;letter-spacing:-0.108px">FlushBuf</span>
<span class="w it" style="left:1438.48px;top:545px;letter-spacing:0.118px">*)</span>
<span class="w" style="left:1038.00px;top:563px;letter-spacing:-0.014px">force*:</span>
<span class="w" style="left:1085.32px;top:563px;letter-spacing:0.079px">BOOLEAN;</span>
<span class="w it" style="left:1183.00px;top:563px;letter-spacing:0.118px">(*</span>
<span class="w it" style="left:1198.12px;top:563px;letter-spacing:-0.032px">force</span>
<span class="w it" style="left:1235.36px;top:563px;letter-spacing:0.274px">=&gt;</span>
<span class="w it" style="left:1257.48px;top:563px;letter-spacing:0.103px">every</span>
<span class="w it" style="left:1298.72px;top:563px;letter-spacing:-0.085px">call</span>
<span class="w it" style="left:1324.92px;top:563px;letter-spacing:0.118px">causes</span>
<span class="w it" style="left:1377.20px;top:563px;letter-spacing:-0.304px">a</span>
<span class="w it" style="left:1389.28px;top:563px;letter-spacing:0.006px">Views.Restore</span>
<span class="w it" style="left:1489.84px;top:563px;letter-spacing:0.118px">*)</span>
<span class="w" style="left:1038.00px;top:598px;letter-spacing:-0.101px">hook:</span>
<span class="w" style="left:1078.24px;top:598px;letter-spacing:0.003px">Hook;</span>
<span class="w" style="left:1017.50px;top:633px;letter-spacing:0.172px">PROCEDURE</span>
<span class="w" style="left:1118.90px;top:633px;letter-spacing:-0.198px">(log:</span>
<span class="w" style="left:1151.14px;top:633px;letter-spacing:0.037px">Hook)</span>
<span class="w" style="left:1195.38px;top:633px;letter-spacing:-0.051px">Guard*</span>
<span class="w" style="left:1246.66px;top:633px;letter-spacing:-0.132px">(o:</span>
<span class="w" style="left:1267.82px;top:633px;letter-spacing:0.042px">ANYPTR):</span>
<span class="w" style="left:1342.18px;top:633px;letter-spacing:0.079px">BOOLEAN,</span>
<span class="w" style="left:1423.54px;top:633px;letter-spacing:0.208px">NEW,</span>
<span class="w" style="left:1466.74px;top:633px;letter-spacing:0.207px">ABSTRACT;</span>
<span class="w" style="left:1017.50px;top:668px;letter-spacing:0.172px">PROCEDURE</span>
<span class="w" style="left:1118.90px;top:668px;letter-spacing:-0.198px">(log:</span>
<span class="w" style="left:1151.14px;top:668px;letter-spacing:0.037px">Hook)</span>
<span class="w" style="left:1195.38px;top:668px;letter-spacing:-0.097px">ClearBuf*,</span>
<span class="w" style="left:1266.82px;top:668px;letter-spacing:0.208px">NEW,</span>
<span class="w" style="left:1310.02px;top:668px;letter-spacing:0.207px">ABSTRACT;</span>
<span class="w" style="left:1017.50px;top:685px;letter-spacing:0.172px">PROCEDURE</span>
<span class="w" style="left:1118.90px;top:685px;letter-spacing:-0.198px">(log:</span>
<span class="w" style="left:1151.14px;top:685px;letter-spacing:0.037px">Hook)</span>
<span class="w" style="left:1195.38px;top:685px;letter-spacing:-0.080px">FlushBuf*,</span>
<span class="w" style="left:1267.82px;top:685px;letter-spacing:0.208px">NEW,</span>
<span class="w" style="left:1311.02px;top:685px;letter-spacing:0.207px">ABSTRACT;</span>
<span class="w" style="left:1017.50px;top:737px;letter-spacing:0.172px">PROCEDURE</span>
<span class="w" style="left:1118.90px;top:737px;letter-spacing:-0.198px">(log:</span>
<span class="w" style="left:1151.14px;top:737px;letter-spacing:0.037px">Hook)</span>
<span class="w sel" style="left:1195.38px;top:737px;letter-spacing:-0.078px">Set* (x: SET)</span>
<span class="w" style="left:1282.90px;top:737px;letter-spacing:-0.132px">,</span>
<span class="w" style="left:1290.98px;top:737px;letter-spacing:0.208px">NEW,</span>
<span class="w" style="left:1334.18px;top:737px;letter-spacing:0.207px">ABSTRACT;</span>
<span class="w" style="left:1017.50px;top:755px;letter-spacing:0.172px">PROCEDURE</span>
<span class="w" style="left:1118.90px;top:755px;letter-spacing:-0.198px">(log:</span>
<span class="w" style="left:1151.14px;top:755px;letter-spacing:0.037px">Hook)</span>
<span class="w" style="left:1195.38px;top:755px;letter-spacing:-0.026px">IntForm*</span>
<span class="w" style="left:1256.74px;top:755px;letter-spacing:0.149px">(x:</span>
<span class="w" style="left:1277.90px;top:755px;letter-spacing:0.265px">LONGINT;</span>
<span class="w" style="left:1353.24px;top:755px;letter-spacing:-0.101px">base,</span>
<span class="w" style="left:1393.48px;top:755px;letter-spacing:-0.148px">minWidth:</span>
<span class="w" style="left:1462.88px;top:755px;letter-spacing:0.061px">INTEGER;</span>
<span class="w" style="left:1538.24px;top:755px;letter-spacing:-0.174px">fillCh:</span>
<span class="w" style="left:1578.56px;top:755px;letter-spacing:0.109px">CHAR;</span>
<span class="w" style="left:1278.00px;top:772px;letter-spacing:-0.002px">showBase:</span>
<span class="w" style="left:1355.40px;top:772px;letter-spacing:0.075px">BOOLEAN),</span>
<span class="w" style="left:1441.80px;top:772px;letter-spacing:0.208px">NEW,</span>
<span class="w" style="left:1485.00px;top:772px;letter-spacing:0.207px">ABSTRACT;</span>
<span class="w" style="left:1017.50px;top:790px;letter-spacing:0.172px">PROCEDURE</span>
<span class="w" style="left:1118.90px;top:790px;letter-spacing:-0.198px">(log:</span>
<span class="w" style="left:1151.14px;top:790px;letter-spacing:0.037px">Hook)</span>
<span class="w" style="left:1195.38px;top:790px;letter-spacing:-0.036px">RealForm*</span>
<span class="w" style="left:1270.78px;top:790px;letter-spacing:0.149px">(x:</span>
<span class="w" style="left:1291.94px;top:790px;letter-spacing:-0.029px">REAL;</span>
<span class="w" style="left:1339.18px;top:790px;letter-spacing:-0.080px">precision,</span>
<span class="w" style="left:1406.62px;top:790px;letter-spacing:0.106px">minW,</span>
<span class="w" style="left:1452.86px;top:790px;letter-spacing:-0.010px">expW:</span>
<span class="w" style="left:1499.10px;top:790px;letter-spacing:0.061px">INTEGER;</span>
<span class="w" style="left:1318.00px;top:807px;letter-spacing:-0.174px">fillCh:</span>
<span class="w" style="left:1358.32px;top:807px;letter-spacing:0.097px">CHAR),</span>
<span class="w" style="left:1414.60px;top:807px;letter-spacing:0.208px">NEW,</span>
<span class="w" style="left:1457.80px;top:807px;letter-spacing:0.207px">ABSTRACT;</span>
<span class="w" style="left:1017.50px;top:825px;letter-spacing:0.172px">PROCEDURE</span>
<span class="w" style="left:1118.90px;top:825px;letter-spacing:-0.198px">(log:</span>
<span class="w" style="left:1151.14px;top:825px;letter-spacing:0.037px">Hook)</span>
<span class="w" style="left:1195.38px;top:825px;letter-spacing:0.196px">Tab*,</span>
<span class="w" style="left:1234.60px;top:825px;letter-spacing:0.208px">NEW,</span>
<span class="w" style="left:1277.80px;top:825px;letter-spacing:0.207px">ABSTRACT;</span>
<span class="w" style="left:1017.50px;top:842px;letter-spacing:0.172px">PROCEDURE</span>
<span class="w" style="left:1118.90px;top:842px;letter-spacing:-0.198px">(log:</span>
<span class="w" style="left:1151.14px;top:842px;letter-spacing:0.037px">Hook)</span>
<span class="w" style="left:1195.38px;top:842px;letter-spacing:-0.136px">Ln*,</span>
<span class="w" style="left:1225.58px;top:842px;letter-spacing:0.208px">NEW,</span>
<span class="w" style="left:1268.78px;top:842px;letter-spacing:0.207px">ABSTRACT;</span>
<span class="w" style="left:1017.50px;top:860px;letter-spacing:0.172px">PROCEDURE</span>
<span class="w" style="left:1118.90px;top:860px;letter-spacing:-0.198px">(log:</span>
<span class="w" style="left:1151.14px;top:860px;letter-spacing:0.037px">Hook)</span>
<span class="w" style="left:1195.38px;top:860px;letter-spacing:-0.077px">Para*,</span>
<span class="w" style="left:1240.66px;top:860px;letter-spacing:0.208px">NEW,</span>
<span class="w" style="left:1283.86px;top:860px;letter-spacing:0.207px">ABSTRACT;</span>
<span class="w" style="left:1017.50px;top:877px;letter-spacing:0.172px">PROCEDURE</span>
<span class="w" style="left:1118.90px;top:877px;letter-spacing:-0.198px">(log:</span>
<span class="w" style="left:1151.14px;top:877px;letter-spacing:0.037px">Hook)</span>
<span class="w" style="left:1195.38px;top:877px;letter-spacing:0.024px">View*</span>
<span class="w" style="left:1237.62px;top:877px;letter-spacing:0.149px">(v:</span>
<span class="w" style="left:1258.78px;top:877px;letter-spacing:0.042px">ANYPTR),</span>
<span class="w" style="left:1333.14px;top:877px;letter-spacing:0.208px">NEW,</span>
<span class="w" style="left:1376.34px;top:877px;letter-spacing:0.207px">ABSTRACT;</span>
<span class="w" style="left:1017.50px;top:895px;letter-spacing:0.172px">PROCEDURE</span>
<span class="w" style="left:1118.90px;top:895px;letter-spacing:-0.198px">(log:</span>
<span class="w" style="left:1151.14px;top:895px;letter-spacing:0.037px">Hook)</span>
<span class="w" style="left:1195.38px;top:895px;letter-spacing:0.031px">ViewForm*</span>
<span class="w" style="left:1272.78px;top:895px;letter-spacing:0.149px">(v:</span>
<span class="w" style="left:1293.94px;top:895px;letter-spacing:0.042px">ANYPTR;</span>
<span class="w" style="left:1363.26px;top:895px;letter-spacing:0.454px">w,</span>
<span class="w" style="left:1382.38px;top:895px;letter-spacing:-0.218px">h:</span>
<span class="w" style="left:1398.50px;top:895px;letter-spacing:0.059px">INTEGER),</span>
<span class="w" style="left:1478.90px;top:895px;letter-spacing:0.208px">NEW,</span>
<span class="w" style="left:1522.10px;top:895px;letter-spacing:0.207px">ABSTRACT;</span>
<span class="w" style="left:1017.50px;top:912px;letter-spacing:0.172px">PROCEDURE</span>
<span class="w" style="left:1118.90px;top:912px;letter-spacing:-0.198px">(log:</span>
<span class="w" style="left:1151.14px;top:912px;letter-spacing:0.037px">Hook)</span>
<span class="w" style="left:1195.38px;top:912px;letter-spacing:0.109px">ParamMsg*</span>
<span class="w" style="left:1278.78px;top:912px;letter-spacing:0.040px">(IN</span>
<span class="w" style="left:1302.94px;top:912px;letter-spacing:0.204px">s,</span>
<span class="w" style="left:1319.06px;top:912px;letter-spacing:-0.246px">p0,</span>
<span class="w" style="left:1343.22px;top:912px;letter-spacing:-0.246px">p1,</span>
<span class="w" style="left:1367.38px;top:912px;letter-spacing:-0.246px">p2:</span>
<span class="w" style="left:1391.54px;top:912px;letter-spacing:0.328px">ARRAY</span>
<span class="w" style="left:1447.76px;top:912px;letter-spacing:0.126px">OF</span>
<span class="w" style="left:1472.88px;top:912px;letter-spacing:0.097px">CHAR),</span>
<span class="w" style="left:1529.16px;top:912px;letter-spacing:0.208px">NEW,</span>
<span class="w" style="left:1572.36px;top:912px;letter-spacing:0.207px">ABSTRACT;</span>
</div></div>
<div class="a" style="left:1657px;top:971px;width:20px;height:20px;background:#d4d0c8"></div>
<div class="a chk" style="left:1657px;top:215px;width:20px;height:757px"></div><div class="sb" style="left:1657px;top:215px;width:20px;height:20px"><svg style="position:absolute;left:0;top:0" width="20" height="20"><path d="M5 11L9.5 6L14 11Z" fill="#000"/></svg></div><div class="sb" style="left:1657px;top:952px;width:20px;height:20px"><svg style="position:absolute;left:0;top:0" width="20" height="20"><path d="M5 8L9.5 13L14 8Z" fill="#000"/></svg></div><div class="sb" style="left:1657px;top:235px;width:20px;height:20px"></div>
<div class="a chk" style="left:990px;top:971px;width:668px;height:20px"></div><div class="sb" style="left:990px;top:971px;width:20px;height:20px"><svg style="position:absolute;left:0;top:0" width="20" height="20"><path d="M11.5 5L6 9.5L11.5 14.5Z" fill="#000"/></svg></div><div class="sb" style="left:1638px;top:971px;width:20px;height:20px"><svg style="position:absolute;left:0;top:0" width="20" height="20"><path d="M7.5 5L13 9.5L7.5 14.5Z" fill="#000"/></svg></div><div class="sb" style="left:1010px;top:971px;width:510px;height:20px"></div>
<div class="a" style="left:1677px;top:214px;width:1px;height:777px;background:#777"></div>
<div id="status" class="a"></div>
<div class="a" style="left:840px;top:991px;width:1px;height:16px;background:#000"></div>
<div class="a" style="left:2px;top:991px;width:1px;height:16px;background:#000"></div>
<div class="a" style="left:1677px;top:991px;width:1px;height:16px;background:#000"></div>
<div class="a" style="left:845px;top:993px;font-size:14px;line-height:16px;color:#000;height:13px;overflow:hidden">Allocated Memory: 839'040 Bytes</div>
<div class="a" style="left:0;top:1007px;width:1680px;height:2px;background:#fff"></div>
<div id="task" class="a"></div>
<svg class="a" style="left:0;top:1009px" width="380" height="41" viewBox="0 1009 380 41">
<defs><linearGradient id="ff" x1="0" y1="0" x2="0" y2="1"><stop offset="0" stop-color="#f9a650"/><stop offset="1" stop-color="#f07a28"/></linearGradient></defs>
<circle cx="21" cy="1029.7" r="15" fill="none" stroke="#f2f2f2" stroke-width="2.3"/>
<path d="M14.2 1022V1032.5A4.2 4.2 0 0 0 18.4 1036.7H25A4.2 4.2 0 0 0 29.2 1032.5V1028.6A2.9 2.9 0 0 0 23.4 1028.6V1033.2M23.4 1028.6A2.9 2.9 0 0 0 17.6 1028.6V1033.2" fill="none" stroke="#f2f2f2" stroke-width="2.3"/>
<rect x="51" y="1018" width="30" height="24" fill="#87ad5a"/><rect x="52" y="1019" width="28" height="4" fill="#6a8d45"/><rect x="55" y="1020.5" width="2" height="1.5" fill="#fff"/>
<rect x="100" y="1014.8" width="28.2" height="28.2" rx="6" fill="url(#ff)"/>
<circle cx="114.5" cy="1030.3" r="9.3" fill="#fff"/><path d="M106 1026.5a9 9 0 0 1 6-6.5l2.5 2.5a5 5 0 0 0-3 3.5z" fill="url(#ff)"/><ellipse cx="115" cy="1028.5" rx="4.8" ry="3.6" fill="#f58a36"/><path d="M111 1031.5q4 1.8 8-1" stroke="#fff" stroke-width="1.4" fill="none"/><path d="M120 1020a10 10 0 0 1 3.5 8" stroke="#fff" stroke-width="1" fill="none"/>
<linearGradient id="tg" x1="0" y1="0" x2="0" y2="1"><stop offset="0" stop-color="#3a3a3a"/><stop offset="1" stop-color="#202020"/></linearGradient>
<rect x="145.5" y="1014.5" width="29" height="29" rx="5.5" fill="url(#tg)" stroke="#101010" stroke-width="1"/><path d="M150 1024.5l3.5-2.5M150.5 1022.5l1.5 1.5 M155 1025.5h6" stroke="#f0f0f0" stroke-width="1.3"/>
<circle cx="147" cy="1016.5" r="5.8" fill="#454545"/><text x="144" y="1020.5" font-size="10" font-family="Liberation Sans" fill="#d8e4f0">2</text>
<path d="M194 1018.5a1.5 1.5 0 0 1 1.5-1.5h5.5a1.5 1.5 0 0 1 1.5 1.5v0.3h15a1.2 1.2 0 0 1 1.2 1.2v3h-24.7z" fill="#fafafa"/><rect x="191" y="1021" width="30" height="20" rx="1.5" fill="#87ad5a"/>
<rect x="238" y="1015" width="28" height="28.5" rx="5" fill="#3c3c3c" stroke="#1a1a1a" stroke-width="0.8"/><path d="M252 1029v14.5h9a5 5 0 0 0 5-5v-9.5z" fill="#f06a20"/><path d="M238.5 1029h28M252 1015v28.5" stroke="#2a2a2a" stroke-width="0.9"/>
<path d="M241.5 1021.5h6M244.5 1018.5v6 M256 1021.5h6 M242 1034l5 5M247 1034l-5 5 M256 1035h6M256 1038h6" stroke="#fff" stroke-width="1.2"/>
<rect x="324" y="1009" width="40" height="41" fill="#6a6a6a"/>
<rect x="94" y="1048" width="40" height="2" fill="#8db56a"/><rect x="140" y="1048" width="40" height="2" fill="#8db56a"/><rect x="186" y="1048" width="40" height="2" fill="#8db56a"/><rect x="324" y="1048" width="40" height="2" fill="#8db56a"/>
<path d="M288 1019H296V1021A2.5 2.5 0 0 0 301 1021V1019H307V1024A4.7 4.7 0 0 1 307 1033V1040H299V1038A2.5 2.5 0 0 0 294 1038V1040H288V1033A4.7 4.7 0 0 1 288 1024Z" transform="translate(1 1)" fill="#5a5a10"/><path d="M288 1019H296V1021A2.5 2.5 0 0 0 301 1021V1019H307V1024A4.7 4.7 0 0 1 307 1033V1040H299V1038A2.5 2.5 0 0 0 294 1038V1040H288V1033A4.7 4.7 0 0 1 288 1024Z" fill="#f6f000" stroke="#b8b000" stroke-width="0.7"/><path d="M284 1035.5L311 1021.5" stroke="#e8e8e8" stroke-width="1.3"/><path d="M283 1036l4-0.5-1.8-2.6z M312 1021l-4 0.3 1.8 2.6z" fill="#f0f0f0"/><circle cx="301" cy="1029" r="2.8" fill="#a8d8fa" stroke="#5a9ee0" stroke-width="0.8"/>
<path d="M334 1019H342V1021A2.5 2.5 0 0 0 347 1021V1019H353V1024A4.7 4.7 0 0 1 353 1033V1040H345V1038A2.5 2.5 0 0 0 340 1038V1040H334V1033A4.7 4.7 0 0 1 334 1024Z" transform="translate(1 1)" fill="#5a5a10"/><path d="M334 1019H342V1021A2.5 2.5 0 0 0 347 1021V1019H353V1024A4.7 4.7 0 0 1 353 1033V1040H345V1038A2.5 2.5 0 0 0 340 1038V1040H334V1033A4.7 4.7 0 0 1 334 1024Z" fill="#f6f000" stroke="#b8b000" stroke-width="0.7"/><path d="M330 1035.5L357 1021.5" stroke="#e8e8e8" stroke-width="1.3"/><path d="M329 1036l4-0.5-1.8-2.6z M358 1021l-4 0.3 1.8 2.6z" fill="#f0f0f0"/><circle cx="347" cy="1029" r="2.8" fill="#a8d8fa" stroke="#5a9ee0" stroke-width="0.8"/>
</svg>
<svg class="a" style="left:1400px;top:1009px" width="160" height="41" viewBox="1400 1009 160 41">
<circle cx="1425" cy="1030" r="11" fill="#3d9bd8"/><path d="M1418 1030l12-5-2 10-3-2-2 2v-3l4-4-6 3z" fill="#fff"/>
<path d="M1451 1022h10v3h-10z M1448 1026h16v6h-16z M1451 1030h10v6h-10z" fill="#f0f0f0"/><rect x="1452" y="1031" width="8" height="3" fill="#2d2d2d"/>
<rect x="1475" y="1023" width="20" height="14" fill="#fff"/><path d="M1475 1024h20M1475 1026.2h20M1475 1028.4h20M1475 1030.6h20M1475 1032.8h20M1475 1035h20" stroke="#d03030" stroke-width="1.1"/><rect x="1475" y="1023" width="9" height="7.5" fill="#5a6ea8"/>
<rect x="1511" y="1023" width="5" height="5" fill="#f0f0f0"/><rect x="1506" y="1033" width="5" height="5" fill="#f0f0f0"/><rect x="1516" y="1033" width="5" height="5" fill="#f0f0f0"/><path d="M1513.5 1028v3M1508.5 1033v-2h10v2" stroke="#f0f0f0" stroke-width="1.2" fill="none"/>
<path d="M1532 1027h3l4-3.5v13l-4-3.5h-3z" fill="#f0f0f0"/><path d="M1541 1027a4 4 0 0 1 0 6 M1543.5 1025a7 7 0 0 1 0 10 M1546 1023.5a9.5 9.5 0 0 1 0 13" stroke="#f0f0f0" stroke-width="1.4" fill="none"/>
</svg>
<div class="a" style="left:1557px;top:1023px;font-size:13px;font-weight:bold;color:#f0f0f0;line-height:16px;letter-spacing:0.3px">Пт, 15 июля, 16:00</div>
</body></html>
